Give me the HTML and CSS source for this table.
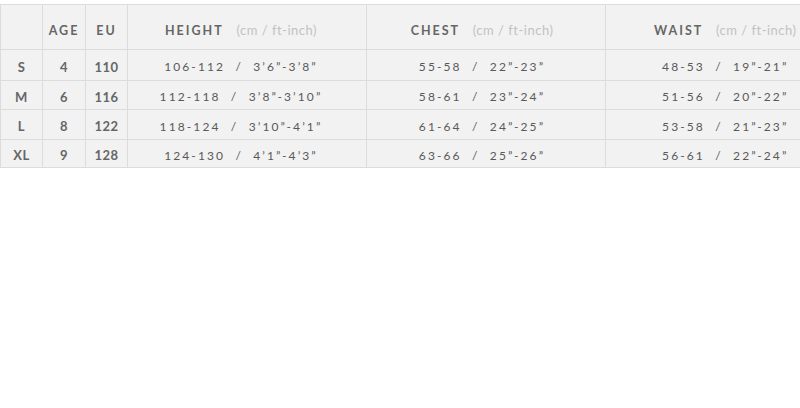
FILE: index.html
```html
<!DOCTYPE html>
<html>
<head>
<meta charset="utf-8">
<link rel="stylesheet" href="styles.css">
</head>
<body>
<table class="size-table">
  <thead>
    <tr>
      <th class="c-size"></th>
      <th class="c-age">AGE</th>
      <th class="c-eu">EU</th>
      <th class="c-m c-h">HEIGHT <span class="unit">(cm / ft-inch)</span></th>
      <th class="c-m c-c">CHEST <span class="unit">(cm / ft-inch)</span></th>
      <th class="c-m c-last">WAIST <span class="unit">(cm / ft-inch)</span></th>
    </tr>
  </thead>
  <tbody>
    <tr>
      <td class="c-size">S</td><td class="c-age">4</td><td class="c-eu">110</td>
      <td class="c-m c-h">106-112&nbsp; / &nbsp;3’6”-3’8”</td>
      <td class="c-m c-c">55-58&nbsp; / &nbsp;22”-23”</td>
      <td class="c-m c-last">48-53&nbsp; / &nbsp;19”-21”</td>
    </tr>
    <tr>
      <td class="c-size">M</td><td class="c-age">6</td><td class="c-eu">116</td>
      <td class="c-m c-h">112-118&nbsp; / &nbsp;3’8”-3’10”</td>
      <td class="c-m c-c">58-61&nbsp; / &nbsp;23”-24”</td>
      <td class="c-m c-last">51-56&nbsp; / &nbsp;20”-22”</td>
    </tr>
    <tr>
      <td class="c-size">L</td><td class="c-age">8</td><td class="c-eu">122</td>
      <td class="c-m c-h">118-124&nbsp; / &nbsp;3’10”-4’1”</td>
      <td class="c-m c-c">61-64&nbsp; / &nbsp;24”-25”</td>
      <td class="c-m c-last">53-58&nbsp; / &nbsp;21”-23”</td>
    </tr>
    <tr>
      <td class="c-size">XL</td><td class="c-age">9</td><td class="c-eu">128</td>
      <td class="c-m c-h">124-130&nbsp; / &nbsp;4’1”-4’3”</td>
      <td class="c-m c-c">63-66&nbsp; / &nbsp;25”-26”</td>
      <td class="c-m c-last">56-61&nbsp; / &nbsp;22”-24”</td>
    </tr>
  </tbody>
</table>
</body>
</html>
```

FILE: styles.css
```css
html, body {
  margin: 0;
  padding: 0;
  background: #ffffff;
  overflow: hidden;
}
body {
  padding-top: 4px;
  font-family: Lato, "Open Sans", sans-serif;
  color: #5a5a5a;
}
.size-table {
  border-collapse: collapse;
  background: #f2f2f2;
  table-layout: fixed;
  width: 800px;
}
.size-table th,
.size-table td {
  border: 1px solid #dcdcdc;
  text-align: center;
  padding: 0;
  white-space: nowrap;
  box-sizing: border-box;
}
.size-table th {
  height: 45px;
  padding-top: 6px;
  font-size: 12.5px;
  font-weight: 700;
  letter-spacing: 2px;
  color: #666666;
}
.size-table td {
  padding-top: 3px;
  font-size: 12px;
  letter-spacing: 2.1px;
  color: #595959;
}
.size-table tbody tr:nth-child(1) td { height: 31px; }
.size-table tbody tr:nth-child(2) td { height: 29px; }
.size-table tbody tr:nth-child(3) td { height: 30px; }
.size-table tbody tr:nth-child(4) td { height: 28px; }
.c-size { width: 42px; }
.c-age { width: 43px; }
.c-eu { width: 42px; }
.c-m { width: 239px; }
.size-table .c-h { padding-right: 12px; }
.size-table .c-c { padding-right: 8px; }
.size-table .c-last {
  width: 195px;
  padding-left: 44px;
  border-right: none;
}
td.c-size, td.c-age, td.c-eu {
  font-weight: 700;
  font-size: 13px;
  letter-spacing: 0.5px;
  color: #666666;
}
.unit {
  font-weight: 400;
  letter-spacing: 0.5px;
  color: #c2c2c2;
  font-size: 13px;
  margin-left: 8px;
}
```
